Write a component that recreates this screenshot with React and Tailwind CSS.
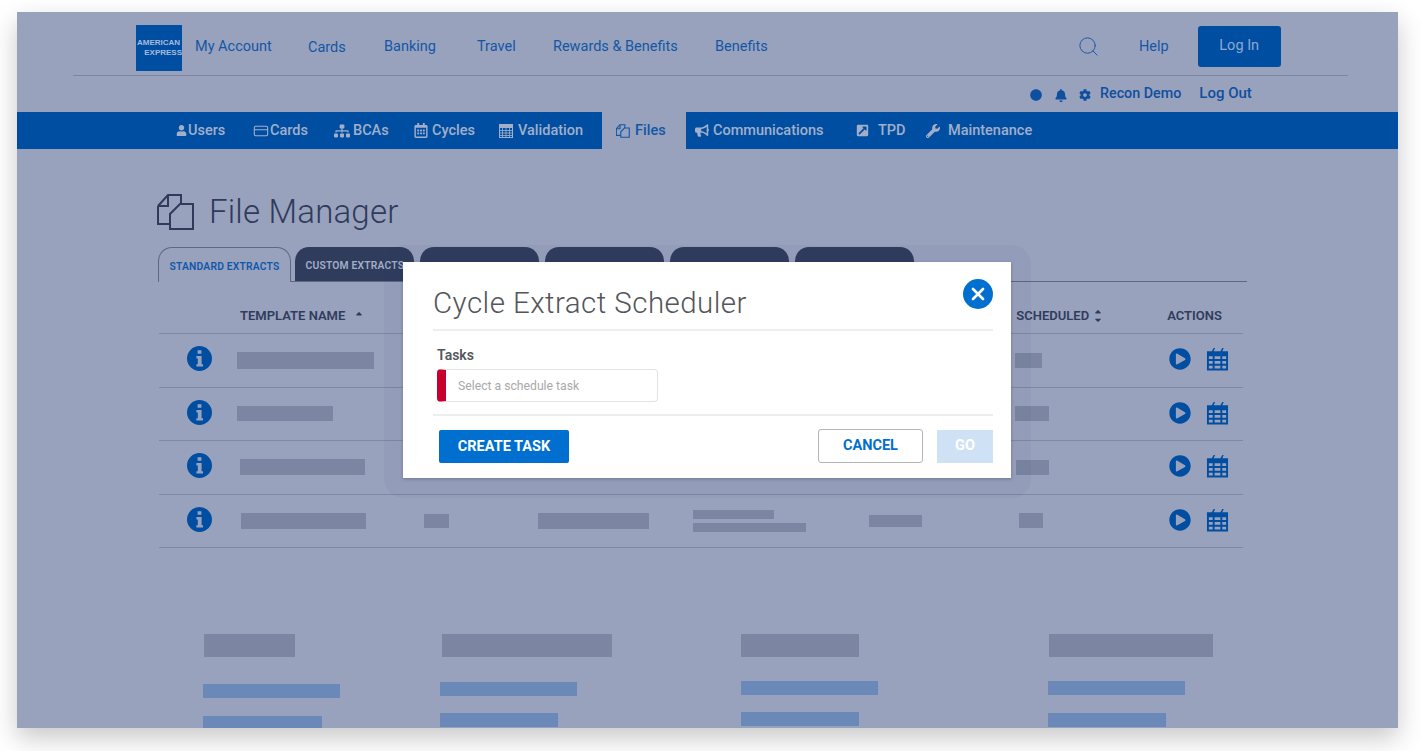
import { CreditCard, Search, X } from 'lucide-react';
import {
  FaUser, FaSitemap, FaRegCalendarAlt, FaBullhorn,
  FaExternalLinkSquareAlt, FaWrench, FaCircle, FaBell, FaCog, FaPlayCircle,
  FaSortUp, FaSortDown,
} from 'react-icons/fa';

const topLinks = [
  { label: 'My Account', cls: 'w-[113px]' },
  { label: 'Cards', cls: 'w-[76px] pt-[2px]' },
  { label: 'Banking', cls: 'w-[93px]' },
  { label: 'Travel', cls: 'w-[76px]' },
  { label: 'Rewards & Benefits', cls: 'w-[162px]' },
  { label: 'Benefits', cls: 'w-[60px]' },
];

const rows = [
  { name: 'ml-[25px] w-[137px] h-[17px]', cell: 'ml-[49px]', last: 'ml-[94px] w-[27px]' },
  { name: 'ml-[25px] w-[96px] h-[15px]', cell: 'ml-[90px]', last: 'ml-[94px] w-[34px]' },
  { name: 'ml-[28px] w-[125px] h-[16px]', cell: 'ml-[59px]', last: 'ml-[94px] w-[33px]' },
  { name: 'ml-[29px] w-[125px] h-[16px]', cell: 'ml-[58px]', last: 'ml-[97px] w-[24px]' },
];

const darkTabs = ['CUSTOM EXTRACTS', '', '', '', ''];

const bottomCols = [
  { ml: 'ml-[186px]', head: 'ml-[1px] w-[91px]', a: 'mt-[27px] w-[137px]', b: 'mt-[18px] w-[119px]' },
  { ml: 'ml-[100px]', head: 'ml-[2px] w-[170px]', a: 'mt-[25px] w-[137px]', b: 'mt-[17px] w-[118px]' },
  { ml: 'ml-[129px]', head: 'w-[118px]', a: 'mt-[24px] w-[137px]', b: 'mt-[17px] w-[118px]' },
  { ml: 'ml-[170px]', head: 'ml-[1px] w-[164px]', a: 'mt-[24px] w-[137px]', b: 'mt-[18px] w-[118px]' },
];

function FilesIcon({ className, strokeWidth = 2 }) {
  return (
    <svg viewBox="0 0 38 38" fill="none" stroke="currentColor" strokeWidth={strokeWidth} className={className}>
      <path d="M1 13 L11 2 H24 V11" />
      <path d="M1 13 V31 H13" />
      <path d="M1 13 H11 V2" />
      <path d="M13 36 V21 L23 11 H36 V36 Z" />
    </svg>
  );
}

function GridIcon() {
  return (
    <svg viewBox="0 0 14 14" fill="none" stroke="currentColor" strokeWidth="1" className="w-[14px] h-[14px] mr-[5px]">
      <rect x="0.5" y="0.5" width="13" height="13" />
      <rect x="0.5" y="0.5" width="13" height="3" fill="currentColor" />
      <path d="M0 6.5 H14 M0 9 H14 M0 11.5 H14 M3.5 4 V14 M7 4 V14 M10.5 4 V14" strokeWidth="0.8" />
    </svg>
  );
}

function InfoIcon() {
  return (
    <svg viewBox="0 0 25 25" className="ml-[28px] -mt-[3px] w-[25px] h-[25px] shrink-0 text-[#004ea1]" fill="currentColor">
      <path
        fillRule="evenodd"
        d="M12.5 0 A12.5 12.5 0 1 0 12.5 25 A12.5 12.5 0 1 0 12.5 0 Z M10.6 4.2 H14.4 V7.8 H10.6 Z M9.4 10 H14.6 V18.2 H16 V20.6 H9.4 V18.2 H10.8 V12.4 H9.4 Z"
      />
    </svg>
  );
}

function CalendarIcon() {
  return (
    <svg viewBox="0 0 24 24" className="w-[23px] h-[24px] text-[#004ea1]" fill="currentColor">
      <path d="M1 4 H6 L8 0.5 H9.5 L8 4 H15 L17 0.5 H18.5 L17 4 H23 V24 H1 Z M3 9 V12 H7 V9 Z M9 9 V12 H15 V9 Z M17 9 V12 H21 V9 Z M3 14 V17 H7 V14 Z M9 14 V17 H15 V14 Z M17 14 V17 H21 V14 Z M3 19 V22 H7 V19 Z M9 19 V22 H15 V19 Z M17 19 V22 H21 V19 Z" fillRule="evenodd" />
    </svg>
  );
}

function NavItem({ icon, label, cls }) {
  return (
    <div className={`flex items-center font-medium ${cls}`}>
      {icon}
      <span>{label}</span>
    </div>
  );
}

function TableRow({ row }) {
  return (
    <div className="flex items-center h-[53.5px] border-b border-[#7f89a6] w-[1084px] ml-[142px] shrink-0">
      <InfoIcon />
      <div className={`bg-[#7c86a2] shrink-0 ${row.name}`} />
      <div className={`bg-[#7c86a2] w-[25px] h-[14px] shrink-0 ${row.cell}`} />
      <div className="bg-[#7c86a2] ml-[89px] w-[111px] h-[16px] shrink-0" />
      <div className="ml-[44px] w-[113px] flex flex-col gap-[4px] shrink-0">
        <div className="bg-[#7c86a2] w-[81px] h-[9px]" />
        <div className="bg-[#7c86a2] w-[113px] h-[9px]" />
      </div>
      <div className="bg-[#7c86a2] ml-[63px] w-[53px] h-[12px] shrink-0" />
      <div className={`bg-[#7c86a2] h-[15px] shrink-0 ${row.last}`} />
    </div>
  );
}

export default function App() {
  return (
    <div className="w-[1421px] h-[751px] bg-white overflow-hidden pt-[12px] pl-[17px] font-['Roboto',sans-serif]">
      <div className="relative w-[1381px] h-[716px] bg-[#99a2bd] overflow-hidden shadow-[0_10px_24px_rgba(0,0,0,0.22)]">
        {/* Top header */}
        <div className="flex items-center h-[63px] ml-[56px] w-[1275px] border-b border-[#7c86a2] box-content text-[14.5px] text-[#1257a6]">
          <div className="ml-[63px] mt-[8px] w-[46px] h-[46px] bg-[#004ea1] flex flex-col justify-center items-end text-[8px] font-bold leading-[10px] text-[#a9bbdb] shrink-0 font-['Liberation_Sans',sans-serif]">
            <span className="w-full pl-px whitespace-nowrap">AMERICAN</span>
            <span>EXPRESS</span>
          </div>
          <nav className="flex items-center ml-[13px] mt-[6px]">
            {topLinks.map((link) => (
              <span key={link.label} className={link.cls}>{link.label}</span>
            ))}
          </nav>
          <Search className="ml-[302px] mt-[6px] w-[23px] h-[23px] text-[#1257a6]" strokeWidth={1} />
          <span className="ml-[39px] mt-[6px]">Help</span>
          <button className="ml-[29px] mt-[5px] w-[83px] h-[41px] rounded-[3px] bg-[#004ea1] text-[#8fa9d2] text-[14.5px]">Log In</button>
        </div>

        {/* Account row */}
        <div className="flex items-center h-[36px] ml-[1013px] text-[14.3px] font-medium text-[#0f4f9f]">
          <FaCircle className="w-[12px] h-[12px] mt-[2px]" />
          <FaBell className="ml-[13px] w-[12px] h-[13px] mt-[2px]" />
          <FaCog className="ml-[12px] w-[12px] h-[12px] mt-[2px]" />
          <span className="ml-[9px] -mt-[1px]">Recon Demo</span>
          <span className="ml-[18px] -mt-[1px] text-[15px]">Log Out</span>
        </div>

        {/* Main nav bar */}
        <div className="flex items-center h-[37px] bg-[#004ea1] text-[14.5px] text-[#a3afca]">
          <NavItem cls="ml-[159px] w-[77px]" icon={<FaUser className="w-[11px] h-[11px] mr-px" />} label="Users" />
          <NavItem cls="w-[81px]" icon={<CreditCard className="w-[16px] h-[16px] mr-px" strokeWidth={1.6} />} label="Cards" />
          <NavItem cls="w-[80px]" icon={<FaSitemap className="w-[16px] h-[14px] mr-[3px]" />} label="BCAs" />
          <NavItem cls="w-[85px]" icon={<FaRegCalendarAlt className="w-[14px] h-[15px] mr-[4px]" />} label="Cycles" />
          <NavItem cls="w-[103px]" icon={<GridIcon />} label="Validation" />
          <div className="flex items-center pl-[14px] w-[84px] h-full bg-[#99a2bd] text-[#1257a6] font-medium">
            <FilesIcon className="w-[14px] h-[14px] mr-[5px]" strokeWidth={3} />
            <span>Files</span>
          </div>
          <NavItem cls="ml-[9px] w-[161px]" icon={<FaBullhorn className="w-[14px] h-[13px] mr-[4px]" />} label="Communications" />
          <NavItem cls="w-[70px]" icon={<FaExternalLinkSquareAlt className="w-[13px] h-[13px] mr-[9px]" />} label="TPD" />
          <NavItem icon={<FaWrench className="w-[14px] h-[14px] mr-[8px]" />} label="Maintenance" />
        </div>

        {/* Page title */}
        <div className="flex items-center ml-[140px] mt-[44px] h-[38px] text-[#2f3b5c]">
          <FilesIcon className="w-[38px] h-[38px]" />
          <h1 className="ml-[14px] text-[33px] font-light tracking-[0.2px]">File Manager</h1>
        </div>

        {/* Tabs */}
        <div className="flex items-end ml-[141px] mt-[16px] w-[1089px] h-[35px] border-b border-[#5d6786] text-[10.3px] font-semibold tracking-[0.2px]">
          <div className="flex items-center justify-center w-[133px] h-[35px] pt-[3px] -mb-px rounded-t-[14px] border border-b-0 border-[#5d6786] bg-[#99a2bd] text-[#0f57ab]">
            STANDARD EXTRACTS
          </div>
          <div className="flex items-end gap-[6px] ml-[3.5px]">
            {darkTabs.map((tab, i) => (
              <div key={i} className="flex items-center w-[119px] h-[34px] pt-[3px] pl-[11px] rounded-t-[14px] bg-[#303c5c] text-[#a3afca] whitespace-nowrap overflow-hidden">
                {tab}
              </div>
            ))}
          </div>
        </div>

        {/* Table head */}
        <div className="flex items-center h-[52px] pt-[16px] w-[1084px] ml-[142px] border-b border-[#7f89a6] text-[13px] font-semibold text-[#303c5c]">
          <span className="ml-[81px]">TEMPLATE NAME</span>
          <FaSortUp className="ml-[9px] w-[10px] h-[10px]" />
          <span className="ml-[652px]">SCHEDULED</span>
          <span className="ml-[4px] flex flex-col">
            <FaSortUp className="w-[10px] h-[10px] -mb-[6px]" />
            <FaSortDown className="w-[10px] h-[10px]" />
          </span>
          <span className="ml-[64px]">ACTIONS</span>
        </div>

        {/* Table rows */}
        <div className="relative">
          {rows.map((row, i) => (
            <div key={i} className="relative">
              <TableRow row={row} />
              <div className="absolute top-[13px] left-[1152px] flex items-center gap-[15px]">
                <FaPlayCircle className="w-[22px] h-[22px] text-[#004ea1]" />
                <CalendarIcon />
              </div>
            </div>
          ))}
        </div>

        {/* Bottom columns */}
        <div className="flex mt-[86px]">
          {bottomCols.map((col, i) => (
            <div key={i} className={`${col.ml} shrink-0`}>
              <div className={`bg-[#7c86a2] h-[23px] ${col.head}`} />
              <div className={`bg-[#6a89b8] h-[14px] ${col.a}`} />
              <div className={`bg-[#6a89b8] h-[14px] ${col.b}`} />
            </div>
          ))}
        </div>

        {/* Modal halo */}
        <div className="absolute left-[367px] top-[233px] w-[647px] h-[253px] rounded-[20px] bg-[#303c5c]/[0.05]" />

        {/* Modal */}
        <div className="absolute left-[386px] top-[250px] w-[608px] h-[216px] bg-white shadow-[0_1px_3px_rgba(40,50,80,0.35)]">
          <div className="flex items-center justify-between ml-[30px] mr-[18px] h-[69px] border-b-2 border-[#eeeeee]">
            <h2 className="mt-[15px] text-[29.5px] font-light text-[#53565a] tracking-[0.45px]">Cycle Extract Scheduler</h2>
            <button className="flex items-center justify-center w-[30px] h-[30px] -mt-[4px] rounded-full bg-[#006fcf] text-white">
              <X className="w-[20px] h-[20px]" strokeWidth={3.2} />
            </button>
          </div>
          <div className="ml-[30px] mr-[18px] h-[85px] border-b-2 border-[#eeeeee] pl-[4px]">
            <div className="pt-[15px] text-[14px] leading-[18px] font-semibold text-[#53565a]">Tasks</div>
            <div className="flex items-center mt-[5px] w-[221px] h-[33px] pt-px rounded-[4px] border border-[#e3e3e3] border-l-[9px] border-l-[#c8002e] pl-[12px] text-[12.2px] text-[#a9a9a9]">
              Select a schedule task
            </div>
          </div>
          <div className="flex items-center ml-[36px] mr-[18px] pt-[14px]">
            <button className="w-[130px] h-[33px] rounded-[2px] bg-[#006fcf] text-white text-[14.5px] font-bold">CREATE TASK</button>
            <button className="ml-auto w-[105px] h-[34px] -mt-[1px] rounded-[3px] border border-[#b5b5b5] bg-white text-[#006fcf] text-[14.5px] font-bold">CANCEL</button>
            <button className="ml-[14px] w-[56px] h-[33px] -mt-[1px] bg-[#cfe2f5] text-white text-[14.5px] font-bold">GO</button>
          </div>
        </div>
      </div>
    </div>
  );
}
